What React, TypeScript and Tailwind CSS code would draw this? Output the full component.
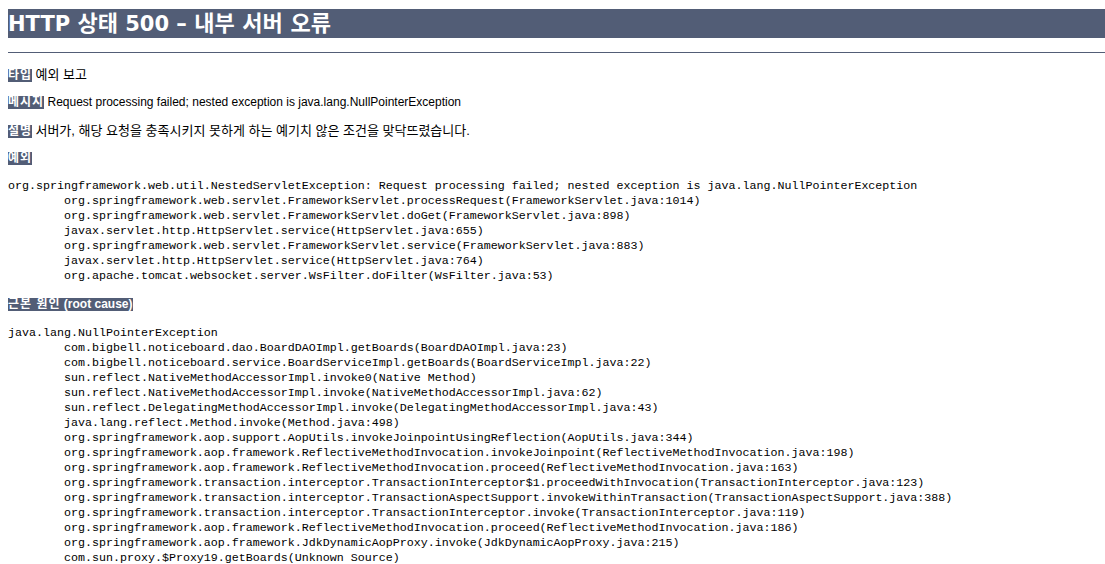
import React from "react";

const trace1 = [
  "org.springframework.web.util.NestedServletException: Request processing failed; nested exception is java.lang.NullPointerException",
  "\torg.springframework.web.servlet.FrameworkServlet.processRequest(FrameworkServlet.java:1014)",
  "\torg.springframework.web.servlet.FrameworkServlet.doGet(FrameworkServlet.java:898)",
  "\tjavax.servlet.http.HttpServlet.service(HttpServlet.java:655)",
  "\torg.springframework.web.servlet.FrameworkServlet.service(FrameworkServlet.java:883)",
  "\tjavax.servlet.http.HttpServlet.service(HttpServlet.java:764)",
  "\torg.apache.tomcat.websocket.server.WsFilter.doFilter(WsFilter.java:53)",
];

const trace2 = [
  "java.lang.NullPointerException",
  "\tcom.bigbell.noticeboard.dao.BoardDAOImpl.getBoards(BoardDAOImpl.java:23)",
  "\tcom.bigbell.noticeboard.service.BoardServiceImpl.getBoards(BoardServiceImpl.java:22)",
  "\tsun.reflect.NativeMethodAccessorImpl.invoke0(Native Method)",
  "\tsun.reflect.NativeMethodAccessorImpl.invoke(NativeMethodAccessorImpl.java:62)",
  "\tsun.reflect.DelegatingMethodAccessorImpl.invoke(DelegatingMethodAccessorImpl.java:43)",
  "\tjava.lang.reflect.Method.invoke(Method.java:498)",
  "\torg.springframework.aop.support.AopUtils.invokeJoinpointUsingReflection(AopUtils.java:344)",
  "\torg.springframework.aop.framework.ReflectiveMethodInvocation.invokeJoinpoint(ReflectiveMethodInvocation.java:198)",
  "\torg.springframework.aop.framework.ReflectiveMethodInvocation.proceed(ReflectiveMethodInvocation.java:163)",
  "\torg.springframework.transaction.interceptor.TransactionInterceptor$1.proceedWithInvocation(TransactionInterceptor.java:123)",
  "\torg.springframework.transaction.interceptor.TransactionAspectSupport.invokeWithinTransaction(TransactionAspectSupport.java:388)",
  "\torg.springframework.transaction.interceptor.TransactionInterceptor.invoke(TransactionInterceptor.java:119)",
  "\torg.springframework.aop.framework.ReflectiveMethodInvocation.proceed(ReflectiveMethodInvocation.java:186)",
  "\torg.springframework.aop.framework.JdkDynamicAopProxy.invoke(JdkDynamicAopProxy.java:215)",
  "\tcom.sun.proxy.$Proxy19.getBoards(Unknown Source)",
];

const sans = "font-['Liberation_Sans','Noto_Sans_CJK_KR',sans-serif]";

function K({ children }: { children: React.ReactNode }) {
  return <span className="text-[13px]">{children}</span>;
}

function LK({ children }: { children: React.ReactNode }) {
  return <span className="tracking-[1px]">{children}</span>;
}

function Label({ children }: { children: React.ReactNode }) {
  return (
    <b className="inline-block h-[13px] leading-[13px] bg-[#525D76] text-white font-bold">
      {children}
    </b>
  );
}

export default function App() {
  return (
    <div className={`bg-white text-black min-h-[564px] pl-2 pt-[9px] overflow-hidden ${sans}`}>
      <h1 className="bg-[#525D76] text-white text-[21px] font-bold leading-[29px] h-[29px] whitespace-nowrap font-['DejaVu_Sans','Noto_Sans_CJK_KR',sans-serif]">
        HTTP <span className="text-[22px]">상태</span> 500 – <span className="text-[22px]">내부 서버 오류</span>
      </h1>
      <div className="mt-[14px] h-px bg-[#525D76]" />
      <div className="mt-[15px] flex flex-col gap-[15px] text-[12px] leading-[13px]">
        <p className="h-[13px] whitespace-nowrap">
          <Label><LK>타입</LK></Label> <K>예외 보고</K>
        </p>
        <p className="h-[13px] whitespace-nowrap">
          <Label><LK>메시지</LK></Label> Request processing failed; nested exception is java.lang.NullPointerException
        </p>
        <p className="h-[13px] whitespace-nowrap">
          <Label><LK>설명</LK></Label> <K>서버가, 해당 요청을 충족시키지 못하게 하는 예기치 않은 조건을 맞닥뜨렸습니다.</K>
        </p>
        <p className="h-[13px] whitespace-nowrap">
          <Label><LK>예외</LK></Label>
        </p>
      </div>
      <pre className="mt-[14px] font-['Liberation_Mono',monospace] text-[11.67px] leading-[15px] [tab-size:8] whitespace-pre">
        {trace1.join("\n")}
      </pre>
      <p className="mt-[14px] text-[12px] leading-[13px] h-[13px] whitespace-nowrap">
        <Label><LK>근본 원인</LK> (root cause)</Label>
      </p>
      <pre className="mt-[15px] font-['Liberation_Mono',monospace] text-[11.67px] leading-[15px] [tab-size:8] whitespace-pre">
        {trace2.join("\n")}
      </pre>
    </div>
  );
}
